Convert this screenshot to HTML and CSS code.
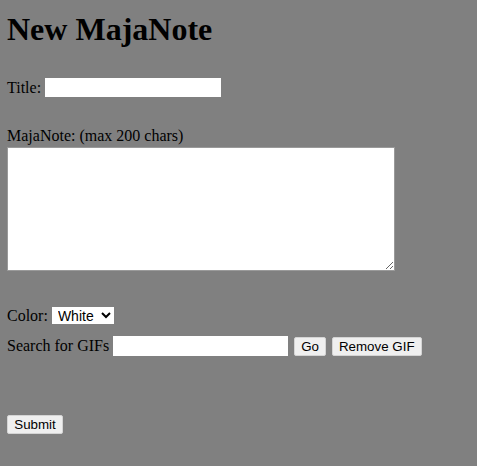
FILE: index.html
```html
<!DOCTYPE html>
<html>
<head>
<meta charset="utf-8">
<title>New MajaNote</title>
<link rel="stylesheet" href="styles.css">
</head>
<body>
<h1 class="page-title">New MajaNote</h1>
<form class="note-form">
  <div class="row title-row">
    <label class="lbl" for="title">Title:</label>
    <input class="text-input title-input" id="title" type="text">
  </div>
  <label class="note-label" for="note">MajaNote: (max 200 chars)</label>
  <textarea class="note-area" id="note"></textarea>
  <div class="row color-row">
    <label class="lbl" for="color">Color:</label>
    <select class="color-select" id="color">
      <option>White</option>
    </select>
  </div>
  <div class="row search-row">
    <label class="lbl" for="gif">Search for GIFs</label>
    <input class="text-input search-input" id="gif" type="text">
    <button class="btn gap-btn" type="button">Go</button>
    <button class="btn gap-btn" type="button">Remove GIF</button>
  </div>
  <div class="submit-row">
    <button class="btn submit-btn" type="submit">Submit</button>
  </div>
</form>
</body>
</html>
```

FILE: styles.css
```css
html, body {
  background: #808080;
}
body {
  margin: 0;
  padding: 0 7px;
  font-family: "Liberation Serif", "Times New Roman", serif;
  font-size: 16px;
  color: #000;
}
.page-title {
  margin: 11px 0 0;
  font-size: 32px;
  line-height: 37px;
  font-weight: bold;
}
.note-form {
  margin: 0;
}
.row {
  display: flex;
  align-items: center;
  gap: 4px;
}
.lbl {
  line-height: 18px;
}
.title-row {
  margin-top: 30px;
  height: 19px;
}
.text-input {
  box-sizing: border-box;
  height: 19px;
  border: none;
  background: #fff;
  padding: 0 2px;
  margin: 0;
  font-family: "Liberation Sans", Arial, sans-serif;
  font-size: 13.33px;
}
.title-input {
  width: 176px;
}
.note-label {
  display: block;
  margin-top: 30px;
  line-height: 18px;
}
.note-area {
  display: block;
  box-sizing: border-box;
  margin: 2px 0 0;
  width: 388px;
  height: 124px;
  border: 1px solid #9a9a9a;
  background: #fff;
  padding: 2px;
}
.color-row {
  margin-top: 36px;
  height: 17px;
}
.color-select {
  box-sizing: border-box;
  width: 62px;
  height: 17px;
  border: none;
  background: #fff;
  margin: 0;
  padding: 0 0 0 2px;
  font-family: "Liberation Sans", Arial, sans-serif;
  font-size: 14px;
  color: #000;
}
.search-row {
  margin-top: 12px;
  height: 20px;
}
.search-input {
  width: 175px;
  height: 20px;
}
.btn {
  box-sizing: border-box;
  height: 19px;
  padding: 0 6px;
  margin: 0;
  border: 1px solid #d4d4d4;
  border-radius: 2px;
  background: #efefef;
  font-family: "Liberation Sans", Arial, sans-serif;
  font-size: 13.33px;
  line-height: 17px;
  color: #000;
}
.gap-btn {
  margin-left: 2px;
}
.submit-btn {
  width: 56px;
}
.submit-row {
  margin-top: 59px;
}
```
